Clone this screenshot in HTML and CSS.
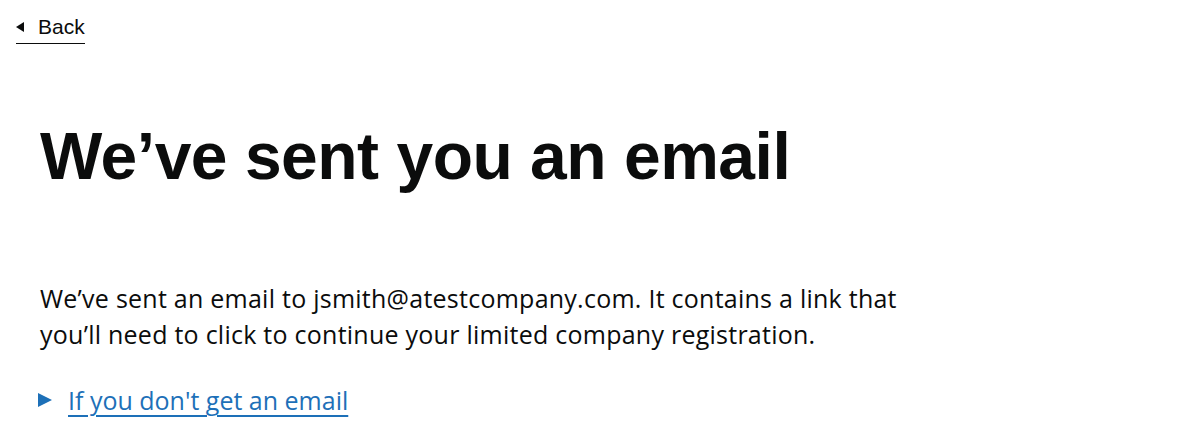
FILE: index.html
```html
<!DOCTYPE html>
<html lang="en">
<head>
<meta charset="utf-8">
<title>We’ve sent you an email</title>
<link rel="stylesheet" href="styles.css">
</head>
<body>
<div class="top">
  <a class="back-link" href="#">Back</a>
</div>
<main class="main">
  <h1 class="heading">We’ve sent you an email</h1>
  <p class="body">We’ve sent an email to jsmith@atestcompany.com. It contains a link that you’ll need to click to continue your limited company registration.</p>
  <details class="details">
    <summary class="summary"><span class="summary-text">If you don't get an email</span></summary>
  </details>
</main>
</body>
</html>
```

FILE: styles.css
```css
* { box-sizing: border-box; }
html, body { margin: 0; padding: 0; background: #fff; }
body {
  font-family: "Liberation Sans", Arial, sans-serif;
  color: #0b0c0c;
  width: 1200px;
  height: 446px;
  overflow: hidden;
}
.top {
  padding: 14px 16px 0;
}
.back-link {
  display: inline-block;
  position: relative;
  padding-left: 22px;
  font-size: 21px;
  line-height: 26px;
  color: #0b0c0c;
  text-decoration: none;
  border-bottom: 1.5px solid #0b0c0c;
  padding-bottom: 3px;
}
.back-link::before {
  content: "";
  position: absolute;
  left: 0;
  top: 8px;
  width: 0;
  height: 0;
  border-style: solid;
  border-width: 5.5px 8px 5.5px 0;
  border-color: transparent #0b0c0c transparent transparent;
}
.main {
  padding: 0 40px;
}
.heading {
  margin: 72px 0 0;
  font-size: 66px;
  line-height: 80px;
  font-weight: 700;
  letter-spacing: -0.5px;
}
.body {
  margin: 84px 0 0;
  font-family: "Open Sans", "Liberation Sans", sans-serif;
  font-size: 25px;
  line-height: 36px;
  max-width: 880px;
  letter-spacing: 0.25px;
}
.details { margin-top: 32px; }
.summary {
  list-style: none;
  display: inline-block;
  position: relative;
  padding-left: 28px;
  font-family: "Open Sans", "Liberation Sans", sans-serif;
  font-size: 25px;
  line-height: 32px;
  color: #1d70b8;
  cursor: pointer;
}
.summary::-webkit-details-marker { display: none; }
.summary::before {
  content: "";
  position: absolute;
  left: -2px;
  top: 9px;
  border-style: solid;
  border-width: 7.5px 0 7.5px 14px;
  border-color: transparent transparent transparent #1d70b8;
}
.summary-text {
  text-decoration: underline;
  text-decoration-thickness: 1.5px;
  text-underline-offset: 5px;
}
```
